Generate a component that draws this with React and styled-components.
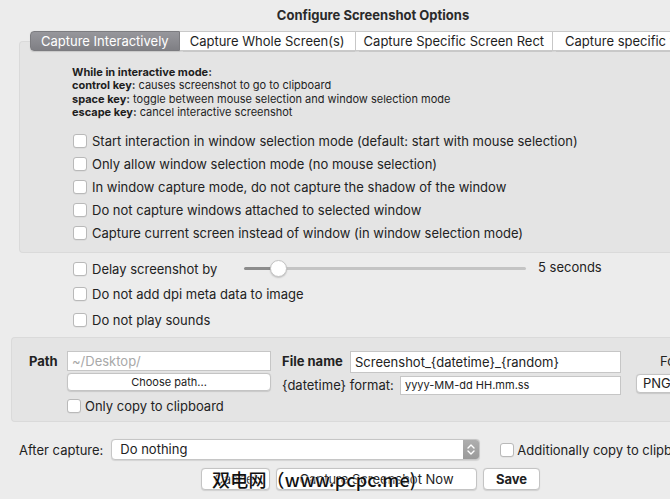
import React from "react";
import styled, { createGlobalStyle } from "styled-components";

const Global = createGlobalStyle`
  html, body { margin: 0; padding: 0; overflow: hidden; background: #ececec; }
  * { box-sizing: border-box; }
  body { font-family: Inter, "Liberation Sans", Arial, sans-serif; color: #222; }
`;

const Frame = styled.div`
  position: relative;
  width: 746px;
  height: 499px;
  background: #ececec;
  padding-top: 7px;
  font-size: 13px;
`;

const Title = styled.div`
  text-align: center;
  font-weight: bold;
  font-size: 13px;
  line-height: 16px;
  color: #2a2a2a;
`;

const TabBar = styled.div`
  display: flex;
  margin: 8px 0 -10px 30px;
  height: 20px;
  position: relative;
  z-index: 1;
`;

const Tab = styled.div`
  height: 20px;
  line-height: 19px;
  padding: 0 ${(p) => p.$pad}px;
  font-size: 13px;
  white-space: nowrap;
  color: ${(p) => (p.$active ? "#fff" : "#1e1e1e")};
  background: ${(p) =>
    p.$active ? "linear-gradient(#97979c, #7f7f84)" : "#fff"};
  border: 1px solid ${(p) => (p.$active ? "#7c7c80" : "#c9c9c9")};
  border-left: ${(p) => (p.$first ? undefined : "none")};
  border-radius: ${(p) => (p.$first ? "4px 0 0 4px" : "0")};
  box-shadow: 0 0.5px 1px rgba(0, 0, 0, 0.12);
`;

const TabBox = styled.div`
  margin-left: 19px;
  height: 212px;
  background: #e4e4e4;
  border: 1px solid #dadada;
  border-right: none;
  border-radius: 4px 0 0 4px;
  padding: 24px 0 0 52px;
`;

const Info = styled.div`
  font-size: 11px;
  line-height: 13.4px;
  color: #1e1e1e;
  b { font-weight: 700; }
`;

const CheckList = styled.div`
  display: flex;
  flex-direction: column;
  margin-top: ${(p) => p.$top || 0}px;
  margin-left: ${(p) => p.$left || 0}px;
`;

const Row = styled.label`
  display: flex;
  align-items: center;
  height: ${(p) => p.$h || 23}px;
  font-size: 13px;
  color: #222;
  white-space: nowrap;
`;

const Box = styled.span`
  display: inline-block;
  width: 14px;
  height: 14px;
  flex: none;
  background: #fff;
  border: 1px solid #b9b9b9;
  border-radius: 3px;
  box-shadow: 0 0.5px 0.5px rgba(0, 0, 0, 0.08);
  margin-right: ${(p) => p.$gap || 5}px;
`;

const Check = ({ children, h, gap }) => (
  <Row $h={h}>
    <Box $gap={gap} />
    {children}
  </Row>
);

const DelayRow = styled.div`
  display: flex;
  align-items: center;
  height: 25.5px;
`;

const DelayLabel = styled.div`
  width: 152px;
`;

const Slider = styled.div`
  position: relative;
  width: 282px;
  height: 3px;
  border-radius: 2px;
  background: linear-gradient(
    to right,
    #8c8c8c 0,
    #8c8c8c ${(p) => p.$pos}px,
    #c4c4c4 ${(p) => p.$pos}px
  );
`;

const Thumb = styled.div`
  position: absolute;
  top: -7px;
  width: 17px;
  height: 17px;
  border-radius: 50%;
  background: #fff;
  border: 1px solid #c4c4c4;
  box-shadow: 0 1px 1.5px rgba(0, 0, 0, 0.18);
`;

const SecondsText = styled.div`
  margin-left: 12px;
  margin-top: -4px;
`;

const PathBox = styled.div`
  margin: 4px 0 0 11px;
  height: 85px;
  background: #e4e4e4;
  border: 1px solid #dadada;
  border-right: none;
  border-radius: 4px 0 0 4px;
  padding: 13px 0 0 17px;
  display: flex;
`;

const FieldLabel = styled.div`
  font-weight: ${(p) => (p.$bold ? 700 : 400)};
  line-height: 21px;
  font-size: 13px;
  width: ${(p) => p.$w}px;
  flex: none;
  white-space: nowrap;
  color: #222;
`;

const Column = styled.div`
  display: flex;
  flex-direction: column;
  width: ${(p) => p.$w}px;
  flex: none;
  margin-left: ${(p) => p.$ml || 0}px;
`;

const Input = styled.div`
  height: ${(p) => p.$h || 21}px;
  background: #fff;
  border: 1px solid #c6c6c6;
  font-size: ${(p) => p.$fs || 13}px;
  line-height: ${(p) => (p.$h || 21) - 2}px;
  padding-left: 4px;
  color: ${(p) => (p.$placeholder ? "#a8a8a8" : "#222")};
  flex: 1;
  white-space: nowrap;
  overflow: hidden;
`;

const PushButton = styled.div`
  height: ${(p) => p.$h || 21}px;
  width: ${(p) => (p.$w ? `${p.$w}px` : "auto")};
  background: #fff;
  border: 1px solid #c4c4c4;
  border-radius: 4px;
  box-shadow: 0 0.5px 1px rgba(0, 0, 0, 0.12);
  font-size: ${(p) => p.$fs || 13}px;
  font-weight: ${(p) => (p.$bold ? 700 : 400)};
  line-height: ${(p) => (p.$h || 21) - 2}px;
  text-align: ${(p) => p.$align || "center"};
  padding-left: ${(p) => p.$pl || 0}px;
  color: #222;
  white-space: nowrap;
  overflow: hidden;
  margin-top: ${(p) => p.$mt || 0}px;
  flex: none;
`;

const FieldRow = styled.div`
  display: flex;
  align-items: center;
  margin-top: ${(p) => p.$mt || 0}px;
`;

const FormatLabel = styled.div`
  line-height: 21px;
  padding-left: 24px;
`;

const AfterRow = styled.div`
  display: flex;
  align-items: center;
  margin: 17px 0 0 19px;
  height: 22px;
`;

const Select = styled.div`
  display: flex;
  width: 369px;
  height: 21px;
  margin-left: 8px;
  background: #fff;
  border: 1px solid #c6c6c6;
  border-radius: 4px;
  overflow: hidden;
  box-shadow: 0 0.5px 1px rgba(0, 0, 0, 0.1);
`;

const SelectText = styled.div`
  flex: 1;
  line-height: 19px;
  padding-left: 8px;
`;

const Stepper = styled.div`
  width: 16px;
  background: linear-gradient(#aeaeae, #9a9a9a);
  display: flex;
  align-items: center;
  justify-content: center;
`;

const ButtonRow = styled.div`
  display: flex;
  gap: 6px;
  margin: 7px 0 0 201px;
`;

const Watermark = styled.div`
  position: absolute;
  left: 212px;
  top: 467px;
  font-family: "Noto Sans CJK SC", "Liberation Sans", sans-serif;
  font-size: 18px;
  font-weight: 500;
  line-height: 24px;
  letter-spacing: 0.2px;
  color: #111;
  text-shadow: 0 0 2px #fff, 0 0 2px #fff;
  pointer-events: none;
`;

export default function App() {
  return (
    <>
      <Global />
      <Frame>
        <Title>Configure Screenshot Options</Title>
        <TabBar>
          <Tab $active $first $pad={10}>Capture Interactively</Tab>
          <Tab $pad={10}>Capture Whole Screen(s)</Tab>
          <Tab $pad={8}>Capture Specific Screen Rect</Tab>
          <Tab $pad={12}>Capture specific window</Tab>
        </TabBar>
        <TabBox>
          <Info>
            <div><b>While in interactive mode:</b></div>
            <div><b>control key:</b> causes screenshot to go to clipboard</div>
            <div><b>space key:</b> toggle between mouse selection and window selection mode</div>
            <div><b>escape key:</b> cancel interactive screenshot</div>
          </Info>
          <CheckList $top={10} $left={1}>
            <Check>Start interaction in window selection mode (default: start with mouse selection)</Check>
            <Check>Only allow window selection mode (no mouse selection)</Check>
            <Check>In window capture mode, do not capture the shadow of the window</Check>
            <Check>Do not capture windows attached to selected window</Check>
            <Check>Capture current screen instead of window (in window selection mode)</Check>
          </CheckList>
        </TabBox>
        <CheckList $top={3} $left={73}>
          <DelayRow>
            <Box />
            <DelayLabel>Delay screenshot by</DelayLabel>
            <Slider $pos={34}>
              <Thumb style={{ left: 26 }} />
            </Slider>
            <SecondsText>5 seconds</SecondsText>
          </DelayRow>
          <Check h={25.5}>Do not add dpi meta data to image</Check>
          <Check h={25.5}>Do not play sounds</Check>
        </CheckList>
        <PathBox>
          <FieldLabel $bold $w={38}>Path</FieldLabel>
          <Column $w={204}>
            <Input $placeholder>~/Desktop/</Input>
            <PushButton $h={18} $fs={11} $mt={2}>Choose path...</PushButton>
            <Row $h={30}>
              <Box $gap={4} />
              Only copy to clipboard
            </Row>
          </Column>
          <Column $w={339} $ml={11}>
            <FieldRow>
              <FieldLabel $bold $w={68}>File name</FieldLabel>
              <Input $h={22}>Screenshot_{"{datetime}"}_{"{random}"}</Input>
            </FieldRow>
            <FieldRow $mt={2}>
              <FieldLabel $w={118}>{"{datetime}"} format:</FieldLabel>
              <Input $h={19} $fs={11}>yyyy-MM-dd HH.mm.ss</Input>
            </FieldRow>
          </Column>
          <Column $w={90} $ml={15}>
            <FormatLabel>Format:</FormatLabel>
            <PushButton $h={19} $align="left" $pl={6} $mt={2}>PNG</PushButton>
          </Column>
        </PathBox>
        <AfterRow>
          <span>After capture:</span>
          <Select>
            <SelectText>Do nothing</SelectText>
            <Stepper>
              <svg width="8" height="13" viewBox="0 0 8 13">
                <path d="M1 5 L4 2 L7 5 M1 8 L4 11 L7 8" fill="none" stroke="#fff" strokeWidth="1.4" strokeLinecap="round" strokeLinejoin="round" />
              </svg>
            </Stepper>
          </Select>
          <Row $h={22} style={{ marginLeft: 20 }}>
            <Box $gap={3} />
            Additionally copy to clipboard
          </Row>
        </AfterRow>
        <ButtonRow>
          <PushButton $w={69} $h={22}>Cancel</PushButton>
          <PushButton $w={201} $h={22}>Capture Screenshot Now</PushButton>
          <PushButton $w={57} $h={22} $bold>Save</PushButton>
        </ButtonRow>
        <Watermark>双电网（www.pcpc.me)</Watermark>
      </Frame>
    </>
  );
}
